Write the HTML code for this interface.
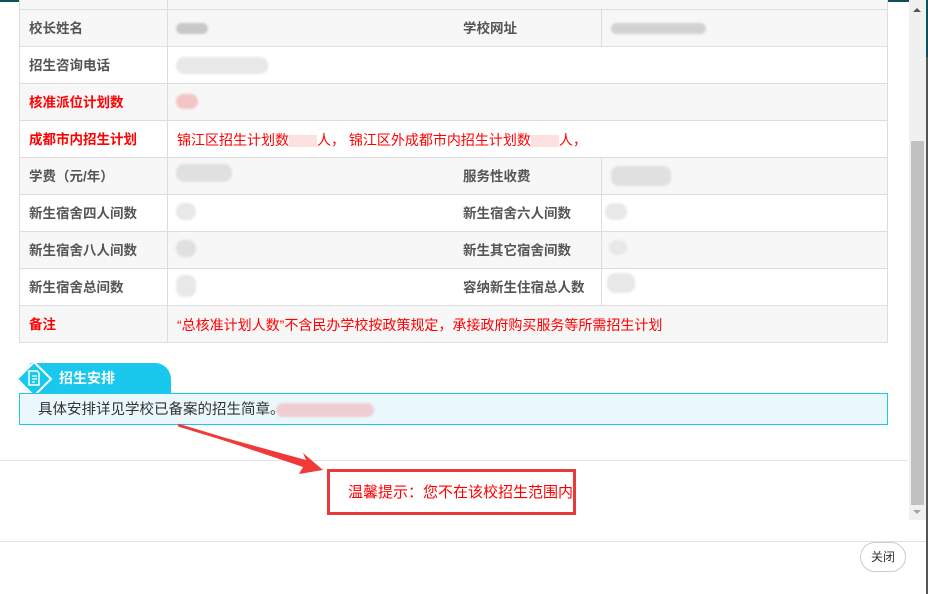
<!DOCTYPE html>
<html><head><meta charset="utf-8"><style>
*{margin:0;padding:0;box-sizing:border-box}
body{width:928px;height:594px;position:relative;overflow:hidden;background:#fff;font-family:"Liberation Sans","Noto Sans CJK SC",sans-serif;font-size:14px;color:#555}
.a{position:absolute}
.row{position:absolute;left:19px;width:869px;height:38px;border:1px solid #ddd;border-bottom:none}
.g{background:#f7f7f7}
.lab{position:absolute;top:1px;height:37px;line-height:36px;font-weight:bold;padding-left:9px;font-size:13.5px}
.val{position:absolute;top:1px;height:37px;line-height:36px;padding-left:9px}
.vl{position:absolute;top:0;height:37px;border-left:1px solid #ddd}
.red{color:#f00}
.blur{position:absolute;border-radius:8px;filter:blur(1px)}
</style></head><body>
<div class="a" style="left:0;top:0;width:928px;height:2px;background:#0d4f5a"></div>
<div class="a" style="left:926px;top:0;width:2px;height:57px;background:#0d4f5a"></div>
<div class="a" style="left:926px;top:57px;width:2px;height:537px;background:#555"></div>

<div class="row g" style="top:-28px"><div class="vl" style="left:147px"></div></div>
<div class="row g" style="top:9px"><div class="lab">校长姓名</div><div class="vl" style="left:147px"></div><div class="lab" style="left:434px">学校网址</div><div class="vl" style="left:581px"></div>
<div class="blur" style="left:156px;top:13px;width:32px;height:11px;background:#c8c8c8"></div>
<div class="blur" style="left:591px;top:13px;width:95px;height:11px;background:#d2d2d2"></div></div>
<div class="row" style="top:46px"><div class="lab">招生咨询电话</div><div class="vl" style="left:147px"></div>
<div class="blur" style="left:156px;top:10px;width:92px;height:17px;background:#e8e8e8"></div></div>
<div class="row g" style="top:83px"><div class="lab red">核准派位计划数</div><div class="vl" style="left:147px"></div>
<div class="blur" style="left:156px;top:10px;width:22px;height:15px;background:#f3c4c4"></div></div>
<div class="row" style="top:120px"><div class="lab red">成都市内招生计划</div><div class="vl" style="left:147px"></div>
<div class="val red" style="left:148px">锦江区招生计划数<span style="display:inline-block;width:28px;height:12px;background:#fde0e0;vertical-align:middle"></span>人， 锦江区外成都市内招生计划数<span style="display:inline-block;width:28px;height:12px;background:#fde0e0;vertical-align:middle"></span>人，</div></div>
<div class="row g" style="top:157px"><div class="lab">学费（元/年）</div><div class="vl" style="left:147px"></div><div class="lab" style="left:434px">服务性收费</div><div class="vl" style="left:581px"></div>
<div class="blur" style="left:156px;top:6px;width:56px;height:18px;background:#e0e0e0"></div>
<div class="blur" style="left:591px;top:8px;width:60px;height:20px;background:#e0e0e0"></div></div>
<div class="row" style="top:194px"><div class="lab">新生宿舍四人间数</div><div class="vl" style="left:147px"></div><div class="lab" style="left:434px">新生宿舍六人间数</div><div class="vl" style="left:581px"></div>
<div class="blur" style="left:156px;top:8px;width:20px;height:17px;background:#e8e8e8"></div>
<div class="blur" style="left:585px;top:8px;width:22px;height:17px;background:#e8e8e8"></div></div>
<div class="row g" style="top:231px"><div class="lab">新生宿舍八人间数</div><div class="vl" style="left:147px"></div><div class="lab" style="left:434px">新生其它宿舍间数</div><div class="vl" style="left:581px"></div>
<div class="blur" style="left:156px;top:8px;width:20px;height:17px;background:#e0e0e0"></div>
<div class="blur" style="left:589px;top:8px;width:18px;height:15px;background:#e8e8e8"></div></div>
<div class="row" style="top:268px"><div class="lab">新生宿舍总间数</div><div class="vl" style="left:147px"></div><div class="lab" style="left:434px">容纳新生住宿总人数</div><div class="vl" style="left:581px"></div>
<div class="blur" style="left:156px;top:6px;width:20px;height:22px;background:#e8e8e8"></div>
<div class="blur" style="left:587px;top:4px;width:28px;height:20px;background:#e8e8e8"></div></div>
<div class="row g" style="top:305px;height:38px;border-bottom:1px solid #ddd"><div class="lab red">备注</div><div class="vl" style="left:147px"></div>
<div class="val red" style="left:148px">“总核准计划人数”不含民办学校按政策规定，承接政府购买服务等所需招生计划</div></div>

<div class="a" style="left:30px;top:363px;width:141px;height:31px;background:#1ac8ee;border-top-right-radius:16px"></div>
<div class="a" style="left:21px;top:366px;width:26px;height:26px;background:#1ac8ee;border:2px solid #fff;transform:rotate(45deg)"></div>
<svg class="a" style="left:26px;top:369px" width="16" height="18" viewBox="0 0 16 18"><path d="M3 2h8l2 2v12H3z" fill="none" stroke="#fff" stroke-width="1.5"/><path d="M6 7h5M6 10h5M6 13h3" stroke="#fff" stroke-width="1.3"/></svg>
<div class="a" style="left:59px;top:363px;height:31px;line-height:30px;color:#fff;font-weight:bold;font-size:14px">招生安排</div>
<div class="a" style="left:19px;top:393px;width:869px;height:32px;background:#eaf8fd;border:1px solid #1ac8ee"></div>
<div class="a" style="left:38px;top:395px;line-height:30px;color:#333;font-size:14.5px">具体安排详见学校已备案的招生简章。</div>
<div class="blur" style="left:276px;top:403px;width:98px;height:14px;background:#efcdd2"></div>

<div class="a" style="left:0;top:460px;width:908px;height:1px;background:#e2e2e2"></div>
<svg class="a" style="left:0;top:0" width="928" height="594"><polygon points="178,425 306,460 303,453 323,470 299,474 303,467" fill="#f03a3a"/><line x1="178" y1="425" x2="306" y2="464" stroke="#f03a3a" stroke-width="3"/></svg>
<div class="a" style="left:327px;top:469px;width:249px;height:46px;border:3px solid #e83a3a"></div>
<div class="a" style="left:327px;top:470px;width:249px;height:46px;line-height:45px;color:#f00;font-size:15px;padding-left:21px">温馨提示：您不在该校招生范围内</div>

<div class="a" style="left:909px;top:0;width:17px;height:520px;background:#f0f0f0"></div>
<div class="a" style="left:911px;top:141px;width:13px;height:364px;background:#c1c1c1"></div>
<div class="a" style="left:913px;top:8px;width:0;height:0;border-left:4px solid transparent;border-right:4px solid transparent;border-bottom:4px solid #555"></div>
<div class="a" style="left:913px;top:510px;width:0;height:0;border-left:4px solid transparent;border-right:4px solid transparent;border-top:4px solid #a3a3a3"></div>

<div class="a" style="left:0;top:541px;width:926px;height:1px;background:#e2e2e2"></div>
<div class="a" style="left:860px;top:542px;width:46px;height:30px;border:1px solid #ccc;border-radius:15px;text-align:center;line-height:28px;color:#333;font-size:12px">关闭</div>
</body></html>
